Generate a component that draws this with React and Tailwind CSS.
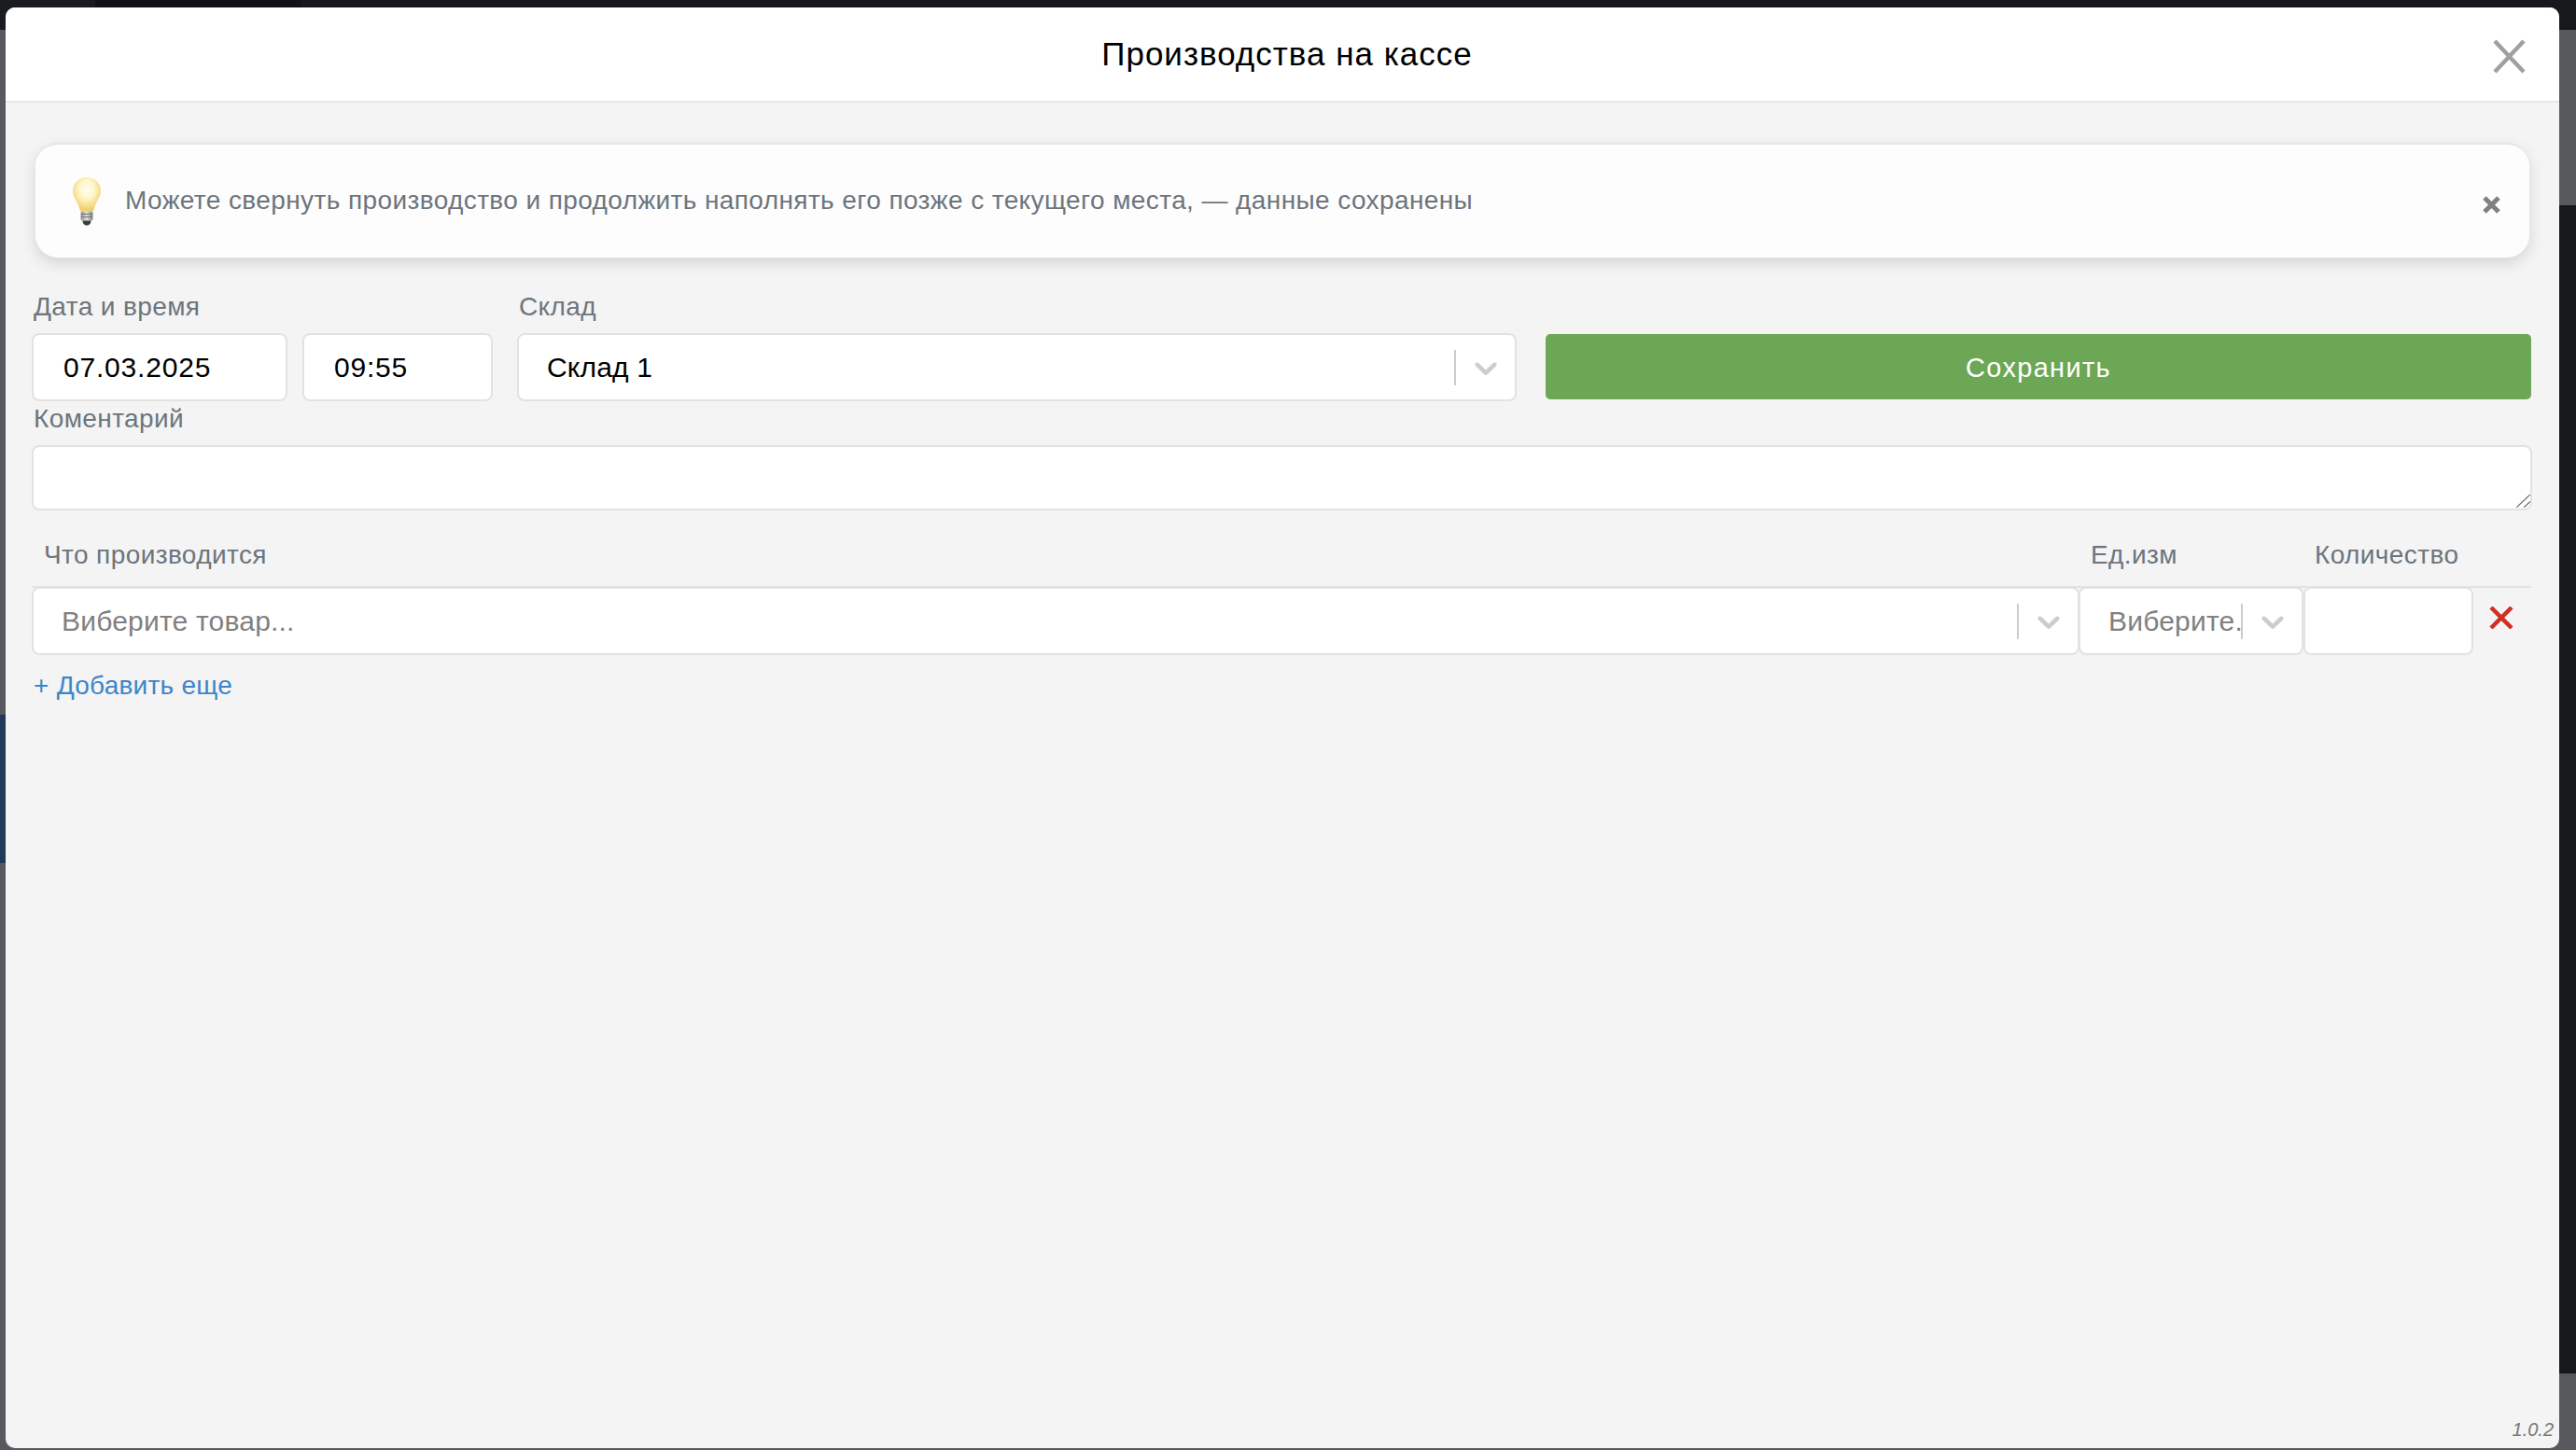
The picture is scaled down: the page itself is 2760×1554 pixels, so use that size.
const font = "font-['Liberation_Sans',Arial,sans-serif]";

function Chevron() {
  return (
    <svg viewBox="0 0 20 20" className="h-10 w-10 shrink-0 fill-[#cccccc]">
      <path d="M4.516 7.548c0.436-0.446 1.043-0.481 1.576 0l3.908 3.747 3.908-3.747c0.533-0.481 1.141-0.446 1.576 0 0.436 0.445 0.408 1.197 0 1.615-0.406 0.418-4.695 4.502-4.695 4.502-0.217 0.223-0.502 0.335-0.789 0.335s-0.572-0.112-0.79-0.335c0 0-4.287-4.084-4.695-4.502s-0.436-1.17 0-1.615z" />
    </svg>
  );
}

function Select({ children, muted, className = "" }) {
  return (
    <div className={`flex h-[73px] items-center rounded-lg border-2 border-[#e2e2e2] bg-white pr-[11px] ${className}`}>
      <div className={`min-w-0 flex-1 overflow-hidden whitespace-nowrap pl-[30px] text-[30px] tracking-[0.2px] ${muted ? "text-[#808080]" : "text-black"}`}>
        {children}
      </div>
      <span className="mr-3 h-[38px] w-0.5 shrink-0 bg-[#cccccc]" />
      <Chevron />
    </div>
  );
}

function Label({ children, className = "" }) {
  return <div className={`h-9 pt-px text-[28px] leading-9 tracking-[0.4px] text-[#6c757d] ${className}`}>{children}</div>;
}

function Bulb() {
  return (
    <svg viewBox="0 0 30 52" className="h-[52px] w-[30px] shrink-0">
      <defs>
        <radialGradient id="glass" cx="50%" cy="36%" r="60%">
          <stop offset="0%" stopColor="#fffef4" />
          <stop offset="45%" stopColor="#fff6c9" />
          <stop offset="100%" stopColor="#f0cf6c" />
        </radialGradient>
        <linearGradient id="base" x1="0" x2="1" y1="0" y2="0">
          <stop offset="0%" stopColor="#8e8e8a" />
          <stop offset="50%" stopColor="#e0e0da" />
          <stop offset="100%" stopColor="#7c7c78" />
        </linearGradient>
      </defs>
      <path d="M15 0C6.5 0 0 6.500 0 14.500c0 6.500 4 10.500 6 15.500 1 2.500 1.500 4.500 2 6.500h14c.5-2 1-4 2-6.500 2-5 6-9 6-15.500C30 6.500 23.500 0 15 0z" fill="url(#glass)" />
      <rect x="8.500" y="36.500" width="13" height="10" rx="2" fill="url(#base)" />
      <path d="M9 39.500h12M9 42.500h12" stroke="#77776f" strokeWidth="1" />
      <path d="M10.500 46.500h9c0 3-2 5-4.500 5s-4.500-2-4.500-5z" fill="#3b3b3b" />
    </svg>
  );
}

export default function App() {
  return (
    <div className={`relative h-[1554px] w-[2760px] overflow-hidden bg-[#58595d] ${font}`}>
      {/* page behind the modal */}
      <div className="flex h-8 bg-[#17181c]">
        <span className="w-[102px] bg-[#1a1b1f]" />
        <span className="w-[220px] bg-[#111216]" />
      </div>
      <span className="absolute right-0 top-[220px] h-[1252px] w-[18px] bg-[#17181c]" />
      <span className="absolute left-0 top-[766px] h-[159px] w-1.5 bg-[#22395c]" />

      <div className="absolute left-1.5 top-2 flex h-[1544px] w-[2736px] flex-col overflow-hidden rounded-[10px] bg-[#f4f4f4]">
        <header className="relative flex h-[102px] shrink-0 items-center justify-center border-b-2 border-[#e6e6e6] bg-white pl-[10px]">
          <h1 className="text-[35px] font-normal tracking-[1px] text-black">Производства на кассе</h1>
          <svg viewBox="0 0 35 37" className="absolute right-[36px] top-[34px] h-[37px] w-[35px] stroke-[#a0a0a0]" strokeWidth="4.5">
            <path d="M2 2l31 33M33 2L2 35" />
          </svg>
        </header>

        <div className="flex flex-col pl-7 pr-[29px]">
          <div className="ml-1 mr-[3px] mt-[43px] flex h-[123px] items-center rounded-3xl border-t-2 border-[#e6e6e6] bg-[#fdfdfd] pl-10 pr-[31px] shadow-[0_6px_16px_rgba(0,0,0,0.13)]">
            <Bulb />
            <p className="mb-0.5 ml-[26px] flex-1 text-[28px] tracking-[0.4px] text-[#6c757d]">
              Можете свернуть производство и продолжить наполнять его позже с текущего места, — данные сохранены
            </p>
            <svg viewBox="0 0 19 19" className="mt-2 h-[19px] w-[19px] stroke-[#808080]" strokeWidth="5">
              <path d="M2 2l15 15M17 2L2 17" />
            </svg>
          </div>

          <div className="mt-[34px] flex items-start">
            <div className="w-[274px]">
              <Label className="mb-[11px] pl-0.5">Дата и время</Label>
              <input
                readOnly
                value="07.03.2025"
                className="h-[73px] w-full rounded-lg border-2 border-[#e2e2e2] bg-white pl-8 text-[30px] tracking-[0.8px] text-black outline-none"
              />
            </div>
            <input
              readOnly
              value="09:55"
              className="ml-4 mt-[47px] h-[73px] w-[204px] rounded-lg border-2 border-[#e2e2e2] bg-white pl-8 text-[30px] tracking-[0.8px] text-black outline-none"
            />
            <div className="ml-[26px] w-[1071px]">
              <Label className="mb-[11px] pl-0.5">Склад</Label>
              <Select>Склад 1</Select>
            </div>
            <button
              type="button"
              className="ml-[31px] mr-px mt-[48px] h-[70px] flex-1 rounded-[5px] bg-[#6ca755] pt-1 text-[29px] font-medium tracking-[1.3px] text-white"
            >
              Сохранить
            </button>
          </div>

          <Label className="pl-0.5">Коментарий</Label>
          <div className="relative mt-[11px]">
            <textarea
              readOnly
              className="block h-[70px] w-full resize-none rounded-lg border-2 border-[#e2e2e2] bg-white outline-none"
            />
            <svg viewBox="0 0 15 14" className="absolute bottom-[3px] right-[2px] h-3.5 w-[15px] stroke-[#666666]" strokeWidth="1.200">
              <path d="M0 14L15 0M8 14l7-6.500" />
            </svg>
          </div>

          <div className="mr-px mt-[29px] grid grid-cols-[2193px_241px_182px_1fr] items-end border-b-2 border-[#e2e2e2] pb-4">
            <Label className="pl-[13px]">Что производится</Label>
            <Label className="pl-[13px]">Ед.изм</Label>
            <Label className="pl-3">Количество</Label>
          </div>
          <div className="-mt-px grid grid-cols-[2193px_241px_182px_1fr] items-center">
            <Select muted className="-mr-px">Виберите товар...</Select>
            <Select muted className="relative">Виберите...</Select>
            <input readOnly className="h-[73px] w-full rounded-lg border-2 border-[#e2e2e2] bg-white outline-none" />
            <svg viewBox="0 0 26 24" className="mb-2 ml-[17px] h-6 w-[26px] stroke-[#d03024]" strokeWidth="4.5">
              <path d="M2 1l22 22M24 1L2 23" />
            </svg>
          </div>
          <a className="mt-[15px] h-9 pl-0.5 text-[28px] leading-9 tracking-[0.25px] text-[#3d85c9]">+ Добавить еще</a>
        </div>

        <span className="absolute bottom-1.5 right-1.5 text-xl italic text-[#777777]">1.0.2</span>
      </div>
    </div>
  );
}
